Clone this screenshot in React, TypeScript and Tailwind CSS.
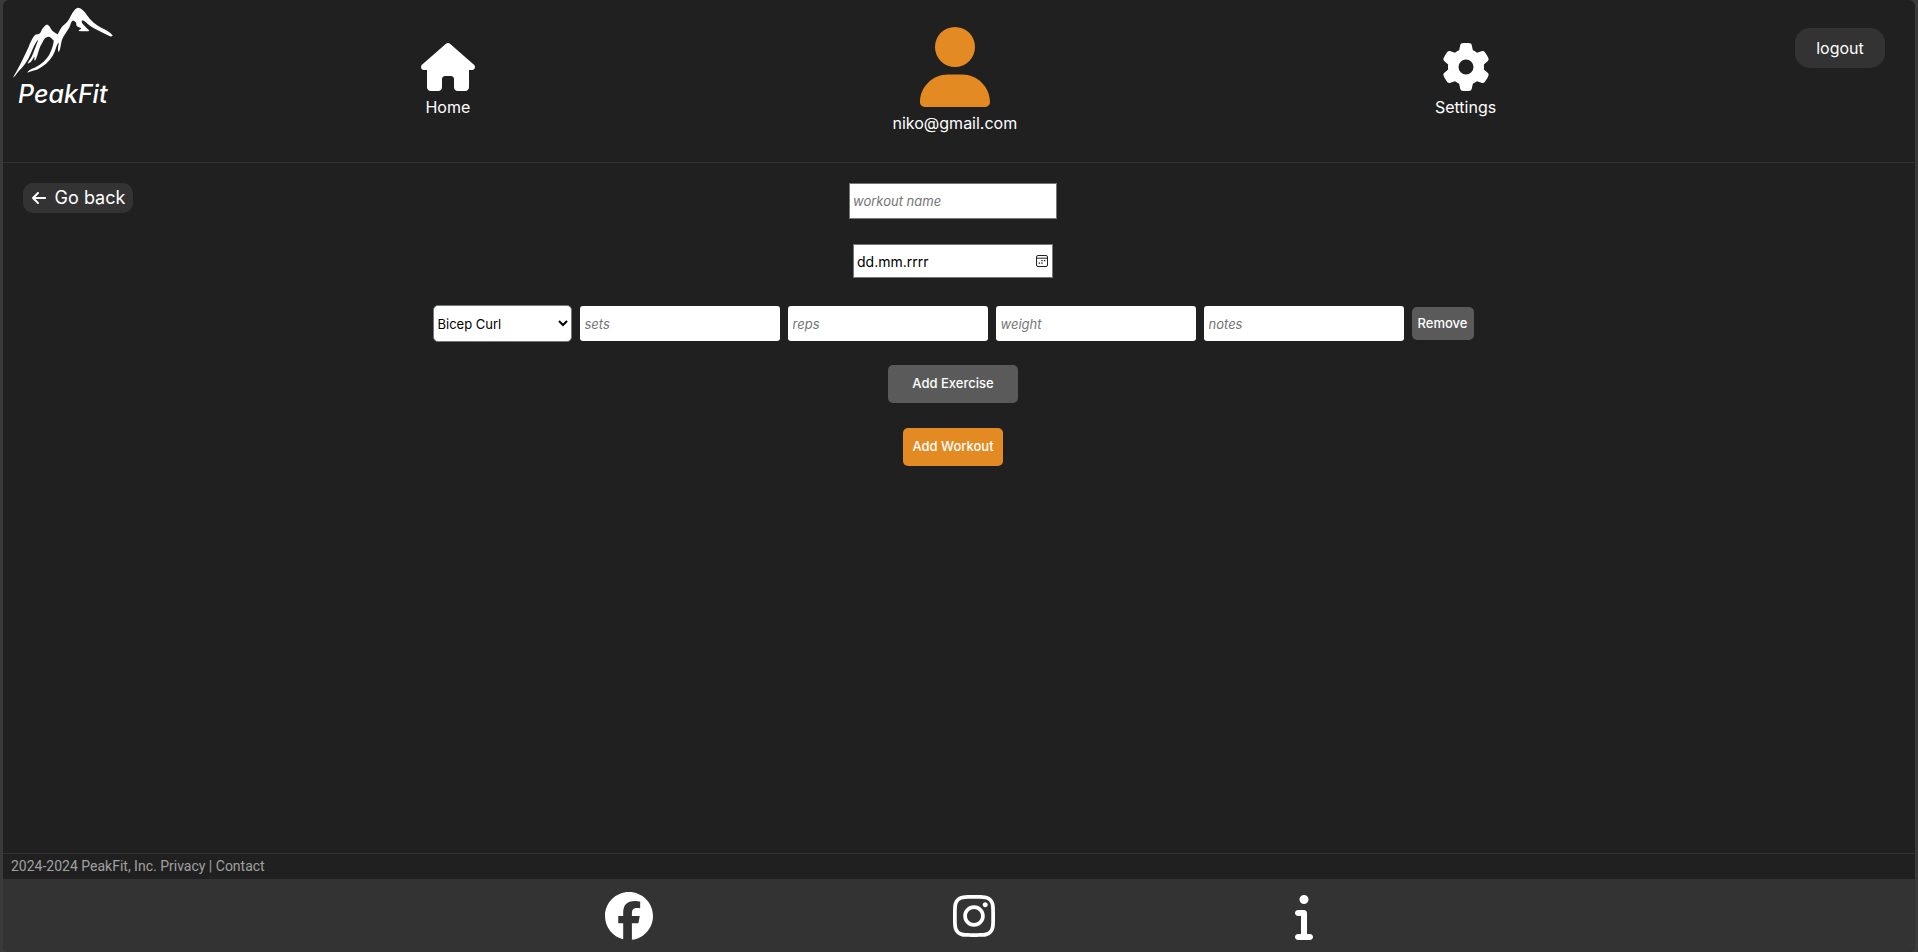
import { useState } from "react";
import {
  FaArrowLeft,
  FaFacebook,
  FaGear,
  FaHouse,
  FaInfo,
  FaInstagram,
  FaUser,
} from "react-icons/fa6";

const EXERCISES = ["Bicep Curl", "Bench Press", "Deadlift", "Squat"];
const FIELDS = ["sets", "reps", "weight", "notes"];

function Logo() {
  return (
    <a href="#" className="flex flex-col pl-[7px]">
      <svg viewBox="30 18 315 220" className="mt-[6px] h-[73px] w-[105px]" fill="#fff" aria-hidden="true">
        <path d="M38 234 C58 200 72 170 85 142 C93 124 99 110 106 105 C112 101 118 104 122 96 C127 86 133 76 141 74 C148 76 151 85 156 92 C162 98 168 100 173 104 C179 91 184 80 194 73 C203 68 207 58 213 47 C219 34 227 24 235 23 C245 25 253 33 262 47 C272 62 286 74 303 83 C318 90 330 96 339 107 C335 112 328 109 321 105 C303 95 284 88 269 77 C259 69 254 61 246 62 C243 70 252 75 260 84 C264 88 269 91 268 93 C258 95 247 93 236 93 C237 89 244 88 244 85 C239 82 233 82 229 76 C231 71 226 63 219 62 C212 66 213 74 208 83 C202 94 192 105 186 120 C182 132 183 145 176 158 C171 148 176 138 176 128 C167 138 168 152 158 168 C147 186 131 200 112 209 C101 213 91 214 82 219 C84 210 95 208 105 203 C125 193 139 180 148 164 C156 148 161 132 161 122 C154 116 149 108 141 112 C133 113 131 121 127 128 C118 142 116 153 112 166 C109 173 108 180 104 184 C101 178 105 172 102 171 C97 180 93 190 82 192 C87 181 95 174 98 163 C105 146 110 131 115 119 C105 128 99 146 91 163 C82 186 67 204 54 216 C49 222 45 230 38 234 Z" />
      </svg>
      <span className="pl-2 text-[25px] leading-[30px] font-medium italic">PeakFit</span>
    </a>
  );
}

function CalendarIcon() {
  return (
    <svg viewBox="0 0 12 12" className="h-3 w-3" fill="none" stroke="#222" aria-hidden="true">
      <rect x="0.5" y="0.5" width="11" height="11" rx="1.5" />
      <path d="M0.5 3.2H11.5" />
      <path d="M5.2 5.7H6.6M7.9 5.7H9.3M2.6 8.2H4M5.2 8.2H6.6" strokeWidth="1.3" />
    </svg>
  );
}

export default function App() {
  const [rows, setRows] = useState<number[]>([0]);

  return (
    <div className="min-h-screen bg-[#3a3a3a] px-[3px] font-['Inter',sans-serif] text-base text-white">
      <div className="flex min-h-screen flex-col overflow-hidden rounded-md bg-[#202020]">
        <header className="grid grid-cols-[209px_1fr_210px] border-b border-[#333] pb-px">
          <Logo />
          <nav className="flex h-[161px] items-center justify-around">
            <a href="#" className="flex flex-col items-center gap-1">
              <FaHouse className="h-12 w-[54px]" />
              Home
            </a>
            <a href="#" className="flex flex-col items-center gap-1">
              <FaUser className="h-20 w-[70px] text-[#e48a22]" />
              niko@gmail.com
            </a>
            <a href="#" className="flex flex-col items-center gap-1">
              <FaGear className="size-12" />
              Settings
            </a>
          </nav>
          <div className="flex items-start justify-end pt-7 pr-[30px]">
            <button type="button" className="h-10 w-[90px] rounded-[15px] bg-[#333]">
              logout
            </button>
          </div>
        </header>

        <main className="grid flex-1 grid-cols-[1fr_auto_1fr] items-start pt-5 pr-8 pl-5">
          <button
            type="button"
            className="flex h-[30px] w-[110px] items-center justify-center gap-2 rounded-[10px] bg-[#333] text-[18px] leading-[28px]"
          >
            <FaArrowLeft className="size-4" />
            Go back
          </button>

          <form className="flex flex-col items-center gap-[25px] text-[13px]" onSubmit={(e) => e.preventDefault()}>
            <input
              type="text"
              aria-label="workout name"
              placeholder="workout name"
              className="h-9 w-[208px] border border-[#767676] bg-white px-[3px] text-black placeholder:text-[#757575] placeholder:italic"
            />
            <div className="flex h-[34px] w-[200px] items-center border border-[#767676] bg-white pr-1 pl-[3px] text-black">
              <input
                type="text"
                aria-label="workout date"
                placeholder="dd.mm.rrrr"
                className="min-w-0 flex-1 text-[14px] placeholder:text-black"
              />
              <button type="button" aria-label="Open calendar">
                <CalendarIcon />
              </button>
            </div>
            {rows.map((id) => (
              <div key={id} className="mt-0.5 -mb-0.5 flex items-center gap-2">
                <select
                  aria-label="exercise"
                  className="h-[37px] w-[139px] rounded-[5px] border border-[#767676] bg-white text-black"
                >
                  {EXERCISES.map((name) => (
                    <option key={name}>{name}</option>
                  ))}
                </select>
                {FIELDS.map((field) => (
                  <input
                    key={field}
                    type="text"
                    aria-label={field}
                    placeholder={field}
                    className="h-[35px] w-[200px] rounded-[3px] bg-white px-[5px] text-black placeholder:text-[#757575] placeholder:italic"
                  />
                ))}
                <button
                  type="button"
                  className="h-[33px] w-[62px] rounded-[5px] bg-[#5a5a5a] font-medium"
                  onClick={() => setRows(rows.filter((r) => r !== id))}
                >
                  Remove
                </button>
              </div>
            ))}
            <button
              type="button"
              className="h-[38px] w-[130px] rounded-[5px] bg-[#5a5a5a] font-medium"
              onClick={() => setRows([...rows, Date.now()])}
            >
              Add Exercise
            </button>
            <button type="submit" className="h-[38px] w-[100px] rounded-[5px] bg-[#e48a22] font-medium">
              Add Workout
            </button>
          </form>
        </main>

        <footer>
          <p className="border-t border-[#333] px-2 pb-px font-['Roboto',sans-serif] text-[14px] leading-[24px] text-[#a0a0a0]">
            2024-2024 PeakFit, Inc. <a href="#">Privacy</a> | <a href="#">Contact</a>
          </p>
          <div className="flex h-[73px] items-center justify-center gap-75 bg-[#333]">
            <a href="#" aria-label="Facebook">
              <FaFacebook className="size-12" />
            </a>
            <a href="#" aria-label="Instagram">
              <FaInstagram className="h-12 w-[42px]" />
            </a>
            <a href="#" aria-label="About">
              <FaInfo className="h-12 w-[18px]" />
            </a>
          </div>
        </footer>
      </div>
    </div>
  );
}
